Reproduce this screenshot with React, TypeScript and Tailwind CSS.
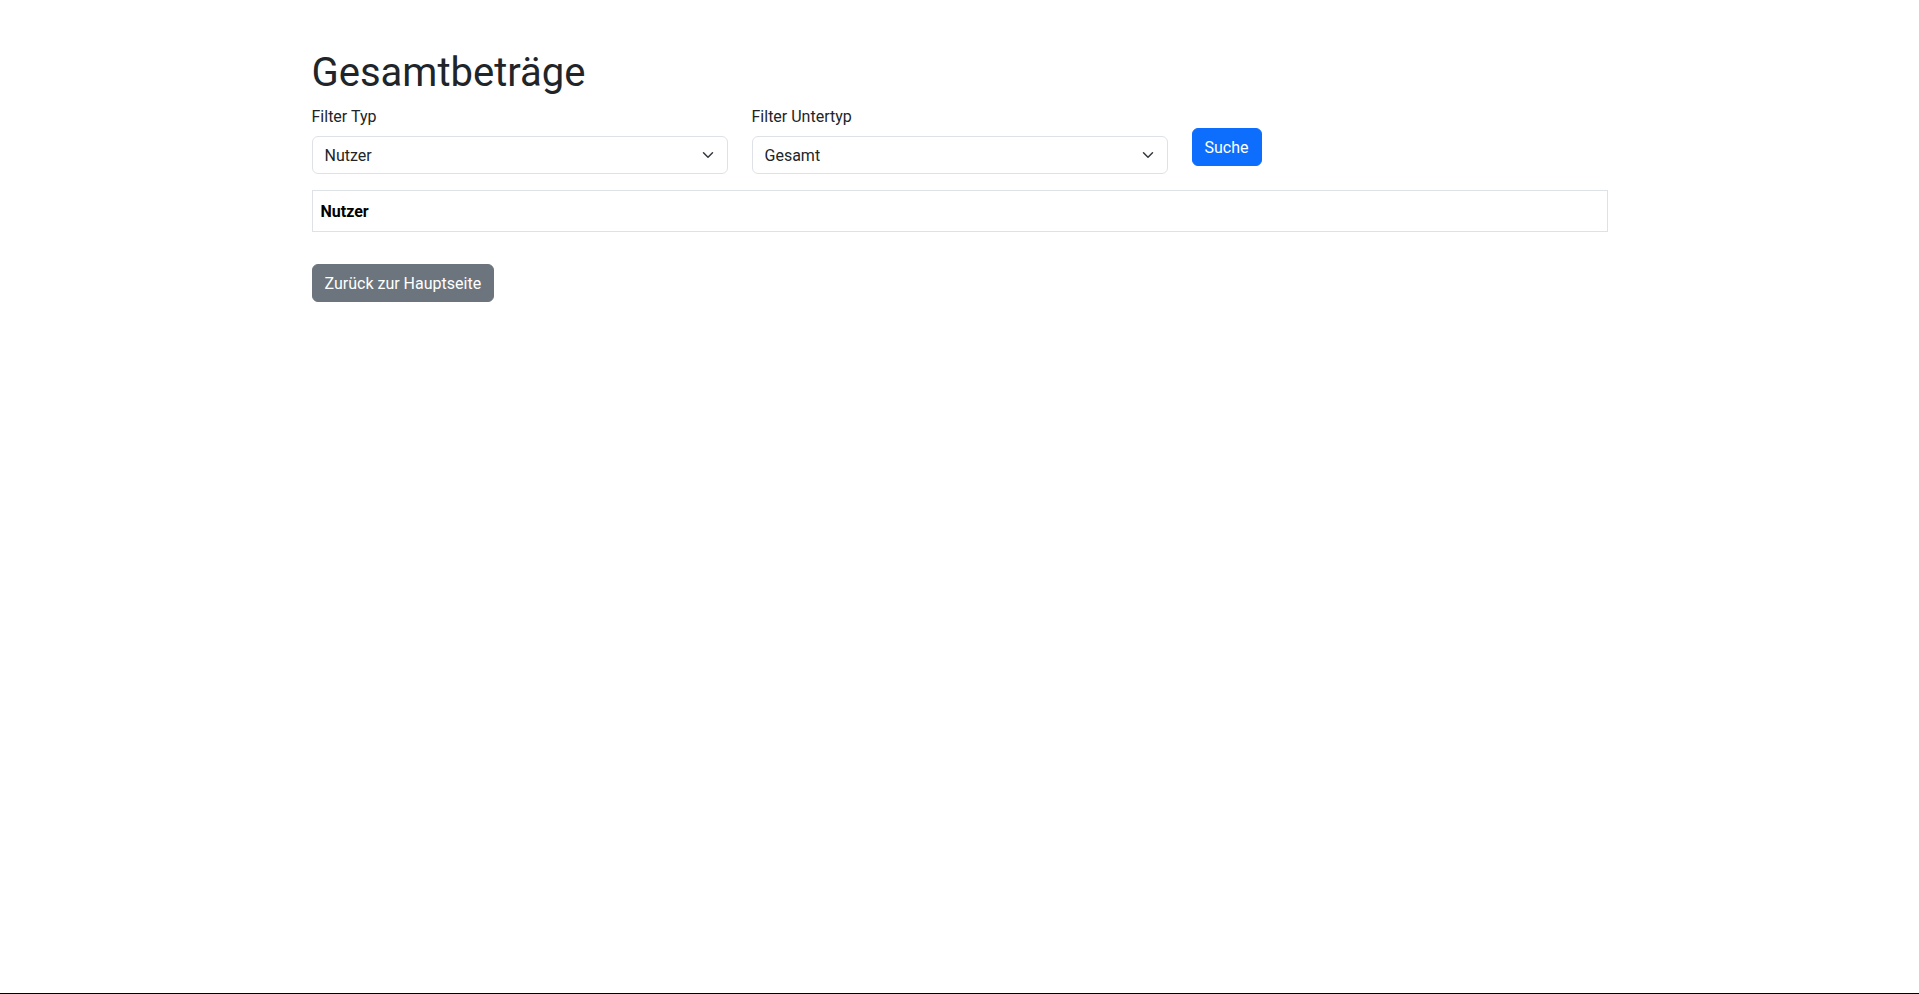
const Select = ({ value }: { value: string }) => (
  <div className="relative">
    <select
      defaultValue={value}
      className="appearance-none w-full h-[38px] border border-[#dee2e6] rounded-md bg-white pl-3 pr-9 pt-px text-base leading-6 text-[#212529] outline-none"
    >
      <option>{value}</option>
    </select>
    <svg
      className="absolute right-3 top-[13px] pointer-events-none"
      width="16"
      height="12"
      viewBox="0 0 16 16"
      fill="none"
      stroke="#343a40"
      strokeWidth="2"
      strokeLinecap="round"
      strokeLinejoin="round"
    >
      <path d="m2 5 6 6 6-6" />
    </svg>
  </div>
);

const App = () => {
  return (
    <div className="min-h-[994px] border-b border-black bg-white text-[#212529] text-base leading-6 font-['Roboto',sans-serif]">
      <div className="max-w-[1320px] mx-auto px-3 pt-12">
        <h1 className="text-[40px] leading-[48px] font-normal pt-px mb-[7px]">Gesamtbeträge</h1>
        <div className="flex gap-6 mb-4">
          <div className="w-[416px]">
            <label className="block mb-2 pt-px h-6">Filter Typ</label>
            <Select value="Nutzer" />
          </div>
          <div className="w-[416px]">
            <label className="block mb-2 pt-px h-6">Filter Untertyp</label>
            <Select value="Gesamt" />
          </div>
          <div className="pt-6">
            <button className="h-[38px] px-3 pt-px rounded-md bg-[#0d6efd] border border-[#0d6efd] text-white">Suche</button>
          </div>
        </div>
        <table className="w-full">
          <thead>
            <tr>
              <th className="border border-[#dee2e6] text-left px-2 pt-[9px] pb-[7px] font-bold text-black">Nutzer</th>
            </tr>
          </thead>
        </table>
        <div className="mt-8">
          <button className="h-[38px] px-3 pt-px rounded-md bg-[#6c757d] border border-[#6c757d] text-white">Zurück zur Hauptseite</button>
        </div>
      </div>
    </div>
  );
};

export default App;
